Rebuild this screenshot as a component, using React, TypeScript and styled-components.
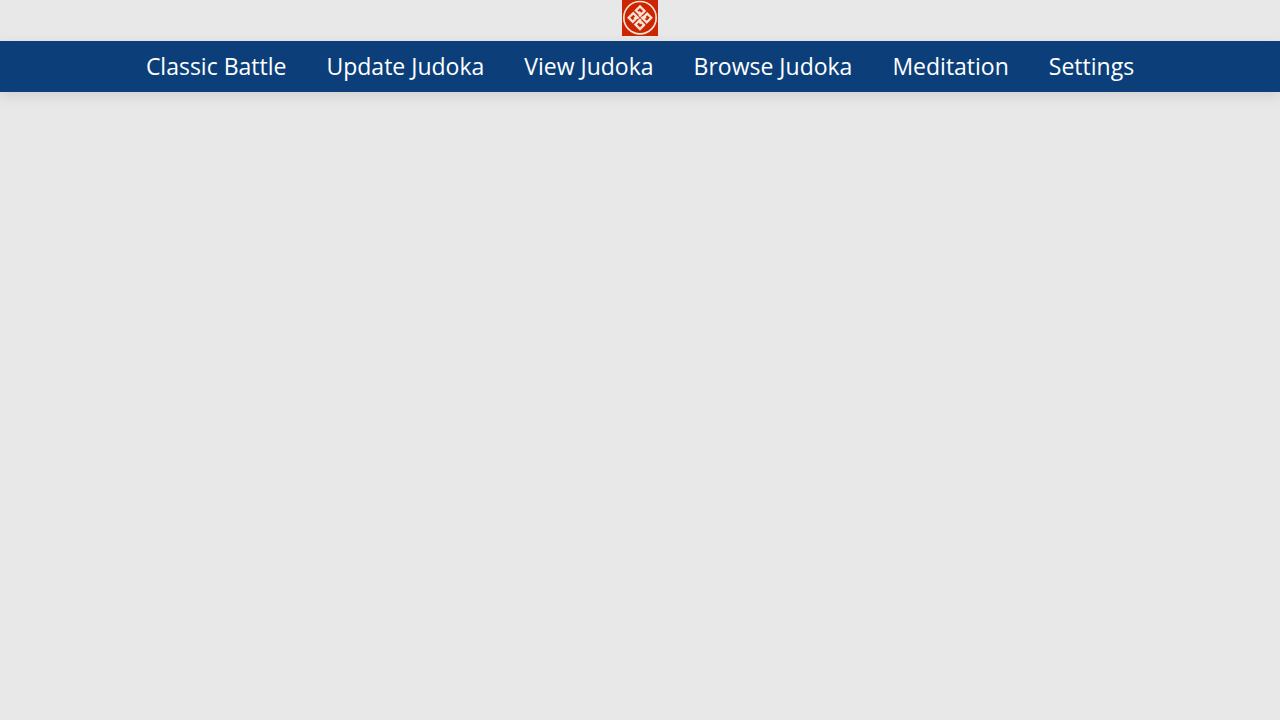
import styled, { createGlobalStyle } from "styled-components";

const GlobalStyle = createGlobalStyle`
  body {
    margin: 0;
    background: #e8e8e8;
    font-family: "Open Sans", sans-serif;
  }
`;

const Page = styled.div`
  min-height: 100vh;
  background: #e8e8e8;
`;

const Header = styled.header`
  display: flex;
  justify-content: center;
  padding-bottom: 5px;
`;

const LogoLink = styled.a`
  display: block;
  height: 36px;
`;

const LogoImage = styled.svg`
  display: block;
  width: 36px;
  height: 36px;
`;

const NavBar = styled.nav`
  background: #0c3f7a;
  box-shadow: 0 4px 12px rgba(0, 0, 0, 0.1);
`;

const NavList = styled.ul`
  display: flex;
  flex-wrap: wrap;
  justify-content: center;
  column-gap: 40px;
  margin: 0;
  padding: 9px 0;
  list-style: none;
`;

const NavLink = styled.a`
  display: block;
  color: #fff;
  font-size: 23px;
  line-height: 33px;
  text-decoration: none;
`;

const links = [
  "Classic Battle",
  "Update Judoka",
  "View Judoka",
  "Browse Judoka",
  "Meditation",
  "Settings",
];

const quarterTurns = [0, 90, 180, 270];

function Logo() {
  return (
    <LogoImage viewBox="0 0 36 36" role="img" aria-label="JU-DO-KON!">
      <rect width="36" height="36" fill="#cb2504" />
      <g fill="none" stroke="#fbe3d2">
        <circle cx="18" cy="17.7" r="16.2" strokeWidth="1.7" />
        <g transform="translate(18 17.7) rotate(45)" strokeWidth="2.3">
          {quarterTurns.map((angle) => (
            <path
              key={angle}
              transform={`rotate(${angle})`}
              d="M-1.5 -0.4V-8H-8V-2.2H-3.8V-4.4"
            />
          ))}
        </g>
      </g>
    </LogoImage>
  );
}

export default function App() {
  return (
    <Page>
      <GlobalStyle />
      <Header>
        <LogoLink href="#home">
          <Logo />
        </LogoLink>
      </Header>
      <NavBar>
        <NavList>
          {links.map((label) => (
            <li key={label}>
              <NavLink href={"#" + label.toLowerCase().replace(" ", "-")}>{label}</NavLink>
            </li>
          ))}
        </NavList>
      </NavBar>
    </Page>
  );
}
